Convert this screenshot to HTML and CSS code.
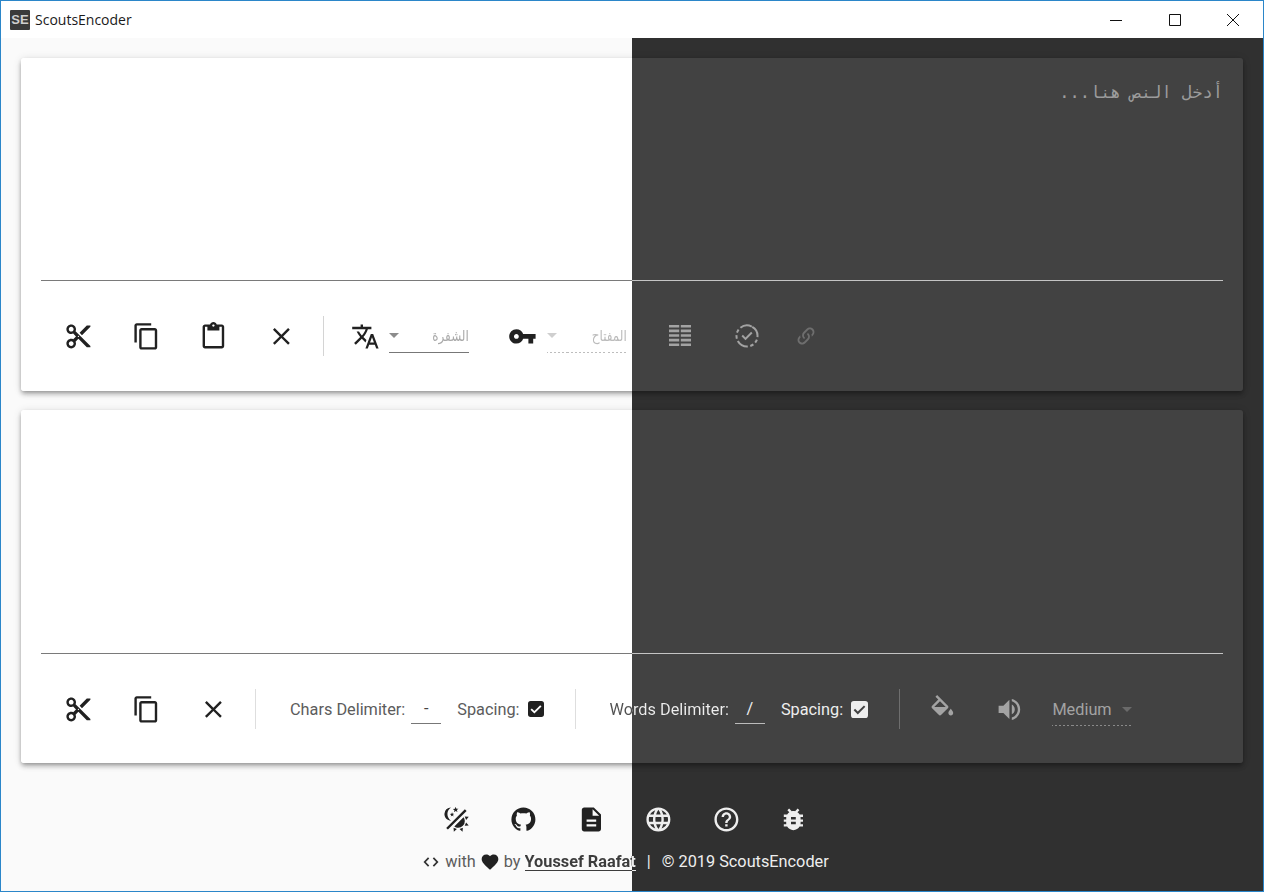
FILE: index.html
```html
<!DOCTYPE html>
<html lang="en">
<head>
  <meta charset="UTF-8" />
  <title>ScoutsEncoder</title>
  <link rel="stylesheet" href="styles.css">
</head>
<body>
  <svg class="sprite" xmlns="http://www.w3.org/2000/svg">
    <symbol id="i-cut" viewBox="0 0 24 24"><path d="M9.64 7.64c.23-.5.36-1.05.36-1.64 0-2.21-1.79-4-4-4S2 3.79 2 6s1.79 4 4 4c.59 0 1.14-.13 1.64-.36L10 12l-2.36 2.36C7.14 14.13 6.59 14 6 14c-2.21 0-4 1.79-4 4s1.79 4 4 4 4-1.79 4-4c0-.59-.13-1.14-.36-1.64L12 14l7 7h3v-1L9.64 7.64zM6 8c-1.1 0-2-.89-2-2s.9-2 2-2 2 .89 2 2-.9 2-2 2zm0 12c-1.1 0-2-.89-2-2s.9-2 2-2 2 .89 2 2-.9 2-2 2zm6-7.5c-.28 0-.5-.22-.5-.5s.22-.5.5-.5.5.22.5.5-.22.5-.5.5zM19 3l-6 6 2 2 7-7V3z"/></symbol>
    <symbol id="i-copy" viewBox="0 0 24 24"><path d="M16 1H4c-1.1 0-2 .9-2 2v14h2V3h12V1zm3 4H8c-1.1 0-2 .9-2 2v14c0 1.1.9 2 2 2h11c1.1 0 2-.9 2-2V7c0-1.1-.9-2-2-2zm0 16H8V7h11v14z"/></symbol>
    <symbol id="i-paste" viewBox="0 0 24 24"><path d="M19 2h-4.18C14.4.84 13.3 0 12 0c-1.3 0-2.4.84-2.82 2H5c-1.1 0-2 .9-2 2v16c0 1.1.9 2 2 2h14c1.1 0 2-.9 2-2V4c0-1.1-.9-2-2-2zm-7 0c.55 0 1 .45 1 1s-.45 1-1 1-1-.45-1-1 .45-1 1-1zm7 18H5V4h2v3h10V4h2v16z"/></symbol>
    <symbol id="i-close" viewBox="0 0 24 24"><path d="M19 6.41L17.59 5 12 10.59 6.41 5 5 6.41 10.59 12 5 17.59 6.41 19 12 13.41 17.59 19 19 17.59 13.41 12z"/></symbol>
    <symbol id="i-translate" viewBox="0 0 24 24"><path d="M12.87 15.07l-2.54-2.51.03-.03c1.74-1.94 2.98-4.17 3.71-6.53H17V4h-7V2H8v2H1v1.99h11.17C11.5 7.92 10.44 9.75 9 11.35 8.07 10.32 7.3 9.19 6.69 8h-2c.73 1.63 1.73 3.17 2.98 4.56l-5.09 5.02L4 19l5-5 3.11 3.11.76-2.04zM18.5 10h-2L12 22h2l1.12-3h4.75L21 22h2l-4.5-12zm-2.62 7l1.62-4.33L19.12 17h-3.24z"/></symbol>
    <symbol id="i-key" viewBox="0 0 24 24"><path d="M12.65 10C11.83 7.67 9.61 6 7 6c-3.31 0-6 2.69-6 6s2.69 6 6 6c2.61 0 4.83-1.67 5.65-4H17v4h4v-4h2v-4H12.65zM7 14c-1.1 0-2-.9-2-2s.9-2 2-2 2 .9 2 2-.9 2-2 2z"/></symbol>
    <symbol id="i-table" viewBox="0 0 24 24"><path d="M1 1h10.2v2.6H1zM12.8 1H23v2.6H12.8zM1 5.6h10.2v2.6H1zM12.8 5.6H23v2.6H12.8zM1 10.2h10.2v2.6H1zM12.8 10.2H23v2.6H12.8zM1 14.8h10.2v2.6H1zM12.8 14.8H23v2.6H12.8zM1 19.4h10.2V22H1zM12.8 19.4H23V22H12.8z"/></symbol>
    <symbol id="i-dashed-check" viewBox="0 0 24 24"><circle cx="12" cy="12" r="10.5" fill="none" stroke="currentColor" stroke-width="2" stroke-dasharray="12 2.5 3.5 2.5 3.5 2.5" transform="rotate(-60 12 12)"/><path d="M10.5 16.2l-4-4 1.4-1.4 2.6 2.6 5.6-5.6 1.4 1.4z"/></symbol>
    <symbol id="i-link" viewBox="0 0 24 24"><path d="M10.59,13.41C11,13.8 11,14.44 10.59,14.83C10.2,15.22 9.56,15.22 9.17,14.83C7.22,12.88 7.22,9.71 9.17,7.76V7.76L12.71,4.22C14.66,2.27 17.83,2.27 19.78,4.22C21.73,6.17 21.73,9.34 19.78,11.29L18.29,12.78C18.3,11.96 18.17,11.14 17.89,10.36L18.36,9.88C19.54,8.71 19.54,6.81 18.36,5.64C17.19,4.46 15.29,4.46 14.12,5.64L10.59,9.17C9.41,10.34 9.41,12.24 10.59,13.41M13.41,9.17C13.8,8.78 14.44,8.78 14.83,9.17C16.78,11.12 16.78,14.29 14.83,16.24V16.24L11.29,19.78C9.34,21.73 6.17,21.73 4.22,19.78C2.27,17.83 2.27,14.66 4.22,12.71L5.71,11.22C5.7,12.04 5.83,12.86 6.11,13.65L5.64,14.12C4.46,15.29 4.46,17.19 5.64,18.36C6.81,19.54 8.71,19.54 9.88,18.36L13.41,14.83C14.59,13.66 14.59,11.76 13.41,10.59C13,10.2 13,9.56 13.41,9.17Z"/></symbol>
    <symbol id="i-fill" viewBox="0 0 24 24"><path d="M16.56 8.94L7.62 0 6.21 1.41l2.38 2.38-5.15 5.15c-.59.59-.59 1.54 0 2.12l5.5 5.5c.29.29.68.44 1.06.44s.77-.15 1.06-.44l5.5-5.5c.59-.58.59-1.53 0-2.12zM5.21 10L10 5.21 14.79 10H5.21zM19 11.5s-2 2.17-2 3.5c0 1.1.9 2 2 2s2-.9 2-2c0-1.33-2-3.5-2-3.5z"/></symbol>
    <symbol id="i-volume" viewBox="0 0 24 24"><path d="M3 9v6h4l5 5V4L7 9H3zm13.5 3c0-1.77-1.02-3.29-2.5-4.03v8.05c1.48-.73 2.5-2.25 2.5-4.02zM14 3.23v2.06c2.89.86 5 3.54 5 6.71s-2.11 5.85-5 6.71v2.06c4.01-.91 7-4.49 7-8.77s-2.99-7.86-7-8.77z"/></symbol>
    <symbol id="i-theme" viewBox="0 0 24 24"><path d="M7.5,2C5.71,3.15 4.5,5.18 4.5,7.5C4.5,9.82 5.71,11.85 7.53,13C4.46,13 2,10.54 2,7.5A5.5,5.5 0 0,1 7.5,2M19.07,3.5L20.5,4.93L4.93,20.5L3.5,19.07L19.07,3.5M12.89,5.93L11.41,5L9.97,6L10.39,4.3L9,3.24L10.75,3.12L11.33,1.47L12,3.1L13.73,3.13L12.38,4.26L12.89,5.93M9.59,9.54L8.43,8.81L7.31,9.59L7.65,8.27L6.56,7.44L7.92,7.35L8.37,6.06L8.88,7.33L10.24,7.34L9.19,8.23L9.59,9.54M19,13.5A5.5,5.5 0 0,1 13.5,19C12.28,19 11.15,18.6 10.24,17.93L17.93,10.24C18.6,11.15 19,12.28 19,13.5M14.6,20.08L17.37,18.93L17.13,22.28L14.6,20.08M18.93,17.38L20.08,14.61L22.28,17.15L18.93,17.38M20.08,12.42L18.94,9.64L22.28,9.88L20.08,12.42M9.63,18.93L12.4,20.08L9.87,22.27L9.63,18.93Z"/></symbol>
    <symbol id="i-github" viewBox="0 0 24 24"><path d="M12,2A10,10 0 0,0 2,12C2,16.42 4.87,20.17 8.84,21.5C9.34,21.58 9.5,21.27 9.5,21C9.5,20.77 9.5,20.14 9.5,19.31C6.73,19.91 6.14,17.97 6.14,17.97C5.68,16.81 5.03,16.5 5.03,16.5C4.12,15.88 5.1,15.9 5.1,15.9C6.1,15.97 6.63,16.93 6.63,16.93C7.5,18.45 8.97,18 9.54,17.76C9.63,17.11 9.89,16.67 10.17,16.42C7.95,16.17 5.62,15.31 5.62,11.5C5.62,10.39 6,9.5 6.65,8.79C6.55,8.54 6.2,7.5 6.75,6.15C6.75,6.15 7.59,5.88 9.5,7.17C10.29,6.95 11.15,6.84 12,6.84C12.85,6.84 13.71,6.95 14.5,7.17C16.41,5.88 17.25,6.15 17.25,6.15C17.8,7.5 17.45,8.54 17.35,8.79C18,9.5 18.38,10.39 18.38,11.5C18.38,15.32 16.04,16.16 13.81,16.41C14.17,16.72 14.5,17.33 14.5,18.26C14.5,19.6 14.5,20.68 14.5,21C14.5,21.27 14.66,21.59 15.17,21.5C19.14,20.16 22,16.42 22,12A10,10 0 0,0 12,2Z"/></symbol>
    <symbol id="i-doc" viewBox="0 0 24 24"><path d="M14 2H6c-1.1 0-1.99.9-1.99 2L4 20c0 1.1.89 2 1.99 2H18c1.1 0 2-.9 2-2V8l-6-6zm2 16H8v-2h8v2zm0-4H8v-2h8v2zm-3-5V3.5L18.5 9H13z"/></symbol>
    <symbol id="i-web" viewBox="0 0 24 24"><path d="M16.36,14C16.44,13.34 16.5,12.68 16.5,12C16.5,11.32 16.44,10.66 16.36,10H19.74C19.9,10.64 20,11.31 20,12C20,12.69 19.9,13.36 19.74,14M14.59,19.56C15.19,18.45 15.65,17.25 15.97,16H18.92C17.96,17.65 16.43,18.93 14.59,19.56M14.34,14H9.66C9.56,13.34 9.5,12.68 9.5,12C9.5,11.32 9.56,10.65 9.66,10H14.34C14.43,10.65 14.5,11.32 14.5,12C14.5,12.68 14.43,13.34 14.34,14M12,19.96C11.17,18.76 10.5,17.43 10.09,16H13.91C13.5,17.43 12.83,18.76 12,19.96M8,8H5.08C6.03,6.34 7.57,5.06 9.4,4.44C8.8,5.55 8.35,6.75 8,8M5.08,16H8C8.35,17.25 8.8,18.45 9.4,19.56C7.57,18.93 6.03,17.65 5.08,16M4.26,14C4.1,13.36 4,12.69 4,12C4,11.31 4.1,10.64 4.26,10H7.64C7.56,10.66 7.5,11.32 7.5,12C7.5,12.68 7.56,13.34 7.64,14M12,4.03C12.83,5.23 13.5,6.57 13.91,8H10.09C10.5,6.57 11.17,5.23 12,4.03M18.92,8H15.97C15.65,6.75 15.19,5.55 14.59,4.44C16.43,5.07 17.96,6.34 18.92,8M12,2C6.47,2 2,6.5 2,12A10,10 0 0,0 12,22A10,10 0 0,0 22,12A10,10 0 0,0 12,2Z"/></symbol>
    <symbol id="i-help" viewBox="0 0 24 24"><path d="M11 18h2v-2h-2v2zm1-16C6.48 2 2 6.48 2 12s4.48 10 10 10 10-4.48 10-10S17.52 2 12 2zm0 18c-4.41 0-8-3.59-8-8s3.59-8 8-8 8 3.59 8 8-3.59 8-8 8zm0-14c-2.21 0-4 1.79-4 4h2c0-1.1.9-2 2-2s2 .9 2 2c0 2-3 1.75-3 5h2c0-2.25 3-2.5 3-5 0-2.21-1.79-4-4-4z"/></symbol>
    <symbol id="i-bug" viewBox="0 0 24 24"><path d="M20 8h-2.81c-.45-.78-1.07-1.45-1.82-1.96L17 4.41 15.59 3l-2.17 2.17C12.96 5.06 12.49 5 12 5c-.49 0-.96.06-1.41.17L8.41 3 7 4.41l1.62 1.63C7.88 6.55 7.26 7.22 6.81 8H4v2h2.09c-.05.33-.09.66-.09 1v1H4v2h2v1c0 .34.04.67.09 1H4v2h2.81c1.04 1.79 2.97 3 5.19 3s4.15-1.21 5.19-3H20v-2h-2.09c.05-.33.09-.66.09-1v-1h2v-2h-2v-1c0-.34-.04-.67-.09-1H20V8zm-6 8h-4v-2h4v2zm0-4h-4v-2h4v2z"/></symbol>
    <symbol id="i-heart" viewBox="0 0 24 24"><path d="M12,21.35L10.55,20.03C5.4,15.36 2,12.27 2,8.5C2,5.41 4.42,3 7.5,3C9.24,3 10.91,3.81 12,5.04C13.09,3.81 14.76,3 16.5,3C19.58,3 22,5.41 22,8.5C22,12.27 18.6,15.36 13.45,20.03L12,21.35Z"/></symbol>
    <symbol id="i-code" viewBox="0 0 24 24"><path d="M8.4 6.4L3 12l5.4 5.6 1.5-1.4L5.8 12l4.1-4.2zM15.6 6.4l-1.5 1.4 4.1 4.2-4.1 4.2 1.5 1.4L21 12z"/></symbol>
    <symbol id="i-box" viewBox="0 0 18 18"><path fill-rule="evenodd" d="M3 0h12a3 3 0 0 1 3 3v12a3 3 0 0 1-3 3H3a3 3 0 0 1-3-3V3a3 3 0 0 1 3-3zm4.2 14.2l8-8L13.7 4.7 7.2 11.2 4.3 8.3 2.8 9.8z"/></symbol>
  </svg>

  <div class="window">
    <header class="titlebar">
      <span class="app-logo">SE</span>
      <span class="app-name">ScoutsEncoder</span>
      <div class="win-controls">
        <svg viewBox="0 0 12 12"><path d="M0 6.5h12"/></svg>
        <svg viewBox="0 0 12 12"><path d="M.5.5h11v11H.5z"/></svg>
        <svg viewBox="0 0 12 12"><path d="M0 0l12 12M12 0L0 12"/></svg>
      </div>
    </header>

    <main class="content">
      <section class="card">
        <textarea class="editor editor-input" dir="rtl" placeholder="أدخل النص هنا..."></textarea>
        <div class="rule"></div>
        <div class="toolbar">
          <button class="tool ink"><svg class="icon"><use href="#i-cut"/></svg></button>
          <button class="tool ink"><svg class="icon"><use href="#i-copy"/></svg></button>
          <button class="tool ink"><svg class="icon"><use href="#i-paste"/></svg></button>
          <button class="tool ink"><svg class="icon"><use href="#i-close"/></svg></button>
          <div class="sep sep-a"></div>
          <svg class="icon ink cipher-icon"><use href="#i-translate"/></svg>
          <div class="select select-cipher" dir="rtl">
            <span class="select-text arabic">الشفرة</span><span class="caret"></span>
          </div>
          <svg class="icon ink key-icon"><use href="#i-key"/></svg>
          <div class="select select-key" dir="rtl">
            <span class="select-text arabic">المفتاح</span><span class="caret"></span>
          </div>
          <button class="tool muted table-tool"><svg class="icon-mid"><use href="#i-table"/></svg></button>
          <button class="tool muted"><svg class="icon-mid"><use href="#i-dashed-check"/></svg></button>
          <svg class="icon-small dim"><use href="#i-link"/></svg>
        </div>
      </section>

      <section class="card">
        <div class="editor editor-output"></div>
        <div class="rule"></div>
        <div class="toolbar toolbar-output">
          <button class="tool ink"><svg class="icon"><use href="#i-cut"/></svg></button>
          <button class="tool ink"><svg class="icon"><use href="#i-copy"/></svg></button>
          <button class="tool ink"><svg class="icon"><use href="#i-close"/></svg></button>
          <div class="sep sep-b"></div>
          <span class="field-label label-chars">Chars Delimiter:</span>
          <span class="delim delim-dark">-</span>
          <span class="field-label label-spacing">Spacing:</span>
          <svg class="check check-dark"><use href="#i-box"/></svg>
          <div class="sep sep-c"></div>
          <span class="field-label label-words split-text">Words Delimiter:</span>
          <span class="delim delim-light">/</span>
          <span class="field-label label-spacing on-dark">Spacing:</span>
          <svg class="check check-light"><use href="#i-box"/></svg>
          <div class="sep sep-d"></div>
          <svg class="icon muted fill-icon"><use href="#i-fill"/></svg>
          <svg class="icon muted volume-icon"><use href="#i-volume"/></svg>
          <div class="select select-speed">
            <span class="select-text">Medium</span><span class="caret"></span>
          </div>
        </div>
      </section>

      <footer class="foot">
        <nav class="foot-links">
          <a class="foot-link ink"><svg class="icon"><use href="#i-theme"/></svg></a>
          <a class="foot-link ink"><svg class="icon"><use href="#i-github"/></svg></a>
          <a class="foot-link ink"><svg class="icon"><use href="#i-doc"/></svg></a>
          <a class="foot-link light"><svg class="icon"><use href="#i-web"/></svg></a>
          <a class="foot-link light"><svg class="icon"><use href="#i-help"/></svg></a>
          <a class="foot-link light"><svg class="icon"><use href="#i-bug"/></svg></a>
        </nav>
        <p class="credit">
          <svg class="credit-icon code-icon"><use href="#i-code"/></svg>
          <span class="credit-dark">with</span>
          <svg class="credit-icon heart-icon"><use href="#i-heart"/></svg>
          <span class="credit-dark">by</span>
          <a class="author split-text">Youssef Raafat</a>
          <span class="credit-light pipe">|</span>
          <span class="credit-light">© 2019 ScoutsEncoder</span>
        </p>
      </footer>
    </main>
  </div>
</body>
</html>
```

FILE: styles.css
```css
:root {
  --ink: #212121;
  --light: #eeeeee;
  --muted: #a3a3a3;
}

* {
  box-sizing: border-box;
}

html, body {
  margin: 0;
  height: 892px;
  overflow: hidden;
}

body {
  font-family: Roboto, "DejaVu Sans", sans-serif;
  font-size: 16.3px;
}

.sprite {
  display: none;
}

.window {
  height: 892px;
  border: 1px solid #2b86c9;
  display: flex;
  flex-direction: column;
}

/* title bar */

.titlebar {
  height: 37px;
  flex: none;
  background: #fff;
  display: flex;
  align-items: center;
  padding-left: 9px;
}

.app-logo {
  width: 20px;
  height: 20px;
  border-radius: 1px;
  background: #3a3a3a;
  color: #cfcfcf;
  font: bold 13px/20px "Liberation Sans", sans-serif;
  text-align: center;
}

.app-name {
  margin-left: 5px;
  font: 14px "Open Sans", sans-serif;
  color: #1a1a1a;
}

.win-controls {
  margin-left: auto;
  display: flex;
  gap: 46.5px;
  padding-right: 24px;
}

.win-controls svg {
  width: 12px;
  height: 12px;
  fill: none;
  stroke: #111;
  stroke-width: 1;
}

/* split background */

.content {
  flex: 1;
  padding: 20px 20px 0;
  background: linear-gradient(90deg, #fafafa 632px, #303030 632px) fixed;
}

.card {
  background: linear-gradient(90deg, #fff 632px, #424242 632px) fixed;
  border-radius: 3px;
  padding: 0 20px;
  margin-bottom: 19px;
  box-shadow: 0 2px 4px -1px rgba(0,0,0,0.3), 0 4px 5px 0 rgba(0,0,0,0.14), 0 1px 8px 0 rgba(0,0,0,0.12);
}

.editor {
  display: block;
  width: 100%;
  border: none;
  outline: none;
  resize: none;
  background: none;
}

.editor-input {
  height: 222px;
  padding: 24px 0 0;
  font: 17px/20px "DejaVu Sans Mono", monospace;
}

.editor-input::placeholder {
  color: #9c9c9c;
  opacity: 1;
}

.editor-output {
  height: 243px;
}

.rule {
  height: 1px;
  background: linear-gradient(90deg, #7a7a7a 632px, #c4c4c4 632px) fixed;
}

.toolbar {
  height: 110px;
  display: flex;
  align-items: center;
  padding-left: 4px;
}

.toolbar-output {
  height: 109px;
  padding-top: 1px;
}

/* icons */

.icon {
  width: 28.8px;
  height: 28.8px;
  fill: currentColor;
  display: block;
  flex: none;
}

.icon-mid {
  width: 24px;
  height: 24px;
  fill: currentColor;
  display: block;
}

.icon-small {
  width: 22px;
  height: 22px;
  fill: currentColor;
  flex: none;
}

.ink { color: var(--ink); }
.light { color: var(--light); }
.muted { color: var(--muted); }
.dim { color: #6e6e6e; }

.tool {
  width: 67.5px;
  flex: none;
  padding: 0;
  border: none;
  background: none;
  display: flex;
  justify-content: center;
}

.tool.muted {
  color: var(--muted);
}

/* separators */

.sep {
  width: 1px;
  height: 40px;
  flex: none;
}

.sep-a { margin: 0 26.6px 0 8px; background: #d4d4d4; }
.sep-b { margin: 0 34px 0 7.5px; background: #dedede; }
.sep-c { margin: 0 34px 0 31px; background: #dedede; }
.sep-d { margin: 0 27.5px 0 31px; background: #6e6e6e; }

/* selects */

.select {
  width: 80px;
  height: 34px;
  flex: none;
  display: flex;
  align-items: center;
  justify-content: space-between;
  border-bottom: 1px solid transparent;
}

.select-text {
  display: inline-block;
  font-size: 15px;
}

.select-text.arabic {
  transform: scaleX(0.8);
  transform-origin: right center;
}

.caret {
  width: 0;
  height: 0;
  border-left: 5px solid transparent;
  border-right: 5px solid transparent;
  border-top: 5px solid currentColor;
}

.select-cipher {
  margin-left: 9.6px;
  color: #8c8c8c;
  border-bottom-color: #777;
}

.select-cipher .select-text { color: #aaa; }

.select-key {
  margin-left: 10.6px;
  color: #cfcfcf;
  border-image: repeating-linear-gradient(90deg, #bdbdbd 0, #bdbdbd 2px, transparent 2px, transparent 4px) 1;
}

.select-key .select-text { color: #bbb; }

.select-speed {
  margin-left: 29px;
  color: #6a6a6a;
  padding-top: 2px;
  border-image: repeating-linear-gradient(90deg, #8a8a8a 0, #8a8a8a 2px, transparent 2px, transparent 4px) 1;
}

.select-speed .select-text {
  font-size: 16.3px;
  color: #a3a3a3;
}

.key-icon { margin-left: 38.6px; }
.table-tool { margin-left: 19px; }
.icon-small.dim { margin-left: 14px; }
.volume-icon { margin-left: 38.2px; }

/* delimiter fields */

.field-label {
  color: #5c5c5c;
  white-space: nowrap;
}

.on-dark { color: var(--light); }

.split-text {
  background: linear-gradient(90deg, var(--left, #505050) 632px, #eeeeee 632px) fixed;
  -webkit-background-clip: text;
  background-clip: text;
  color: transparent;
}

.label-spacing { margin-left: 16px; }

.delim {
  width: 30px;
  height: 30px;
  margin-left: 6px;
  text-align: center;
  line-height: 30px;
  flex: none;
}

.delim-dark { color: #444; border-bottom: 1px solid #777; }
.delim-light { color: #eee; border-bottom: 1px solid #bbb; }

.check {
  width: 17px;
  height: 17px;
  margin-left: 8px;
  flex: none;
}

.check-dark { width: 16px; height: 16px; fill: #212121; }
.check-light { fill: #eeeeee; }

/* footer */

.foot {
  margin-top: 41.6px;
  padding-right: 14px;
  display: flex;
  flex-direction: column;
  align-items: center;
}

.foot-links {
  display: flex;
}

.foot-link {
  width: 67.5px;
  display: flex;
  justify-content: center;
}

.credit {
  margin: 16.6px 0 0;
  display: flex;
  align-items: center;
  gap: 4px;
  line-height: 24px;
}

.credit-icon {
  width: 20px;
  height: 20px;
  fill: currentColor;
}

.code-icon { color: #333; }
.heart-icon { color: #212121; }

.credit-dark { color: #5c5c5c; }
.credit-light { color: #eee; }

.author {
  --left: #3c3c3c;
  position: relative;
  font-weight: bold;
}

.author::after {
  content: "";
  position: absolute;
  left: 0;
  right: 0;
  bottom: 3px;
  height: 1px;
  background: linear-gradient(90deg, #3c3c3c 632px, #eeeeee 632px) fixed;
}

.pipe {
  margin: 0 7px;
}
```
